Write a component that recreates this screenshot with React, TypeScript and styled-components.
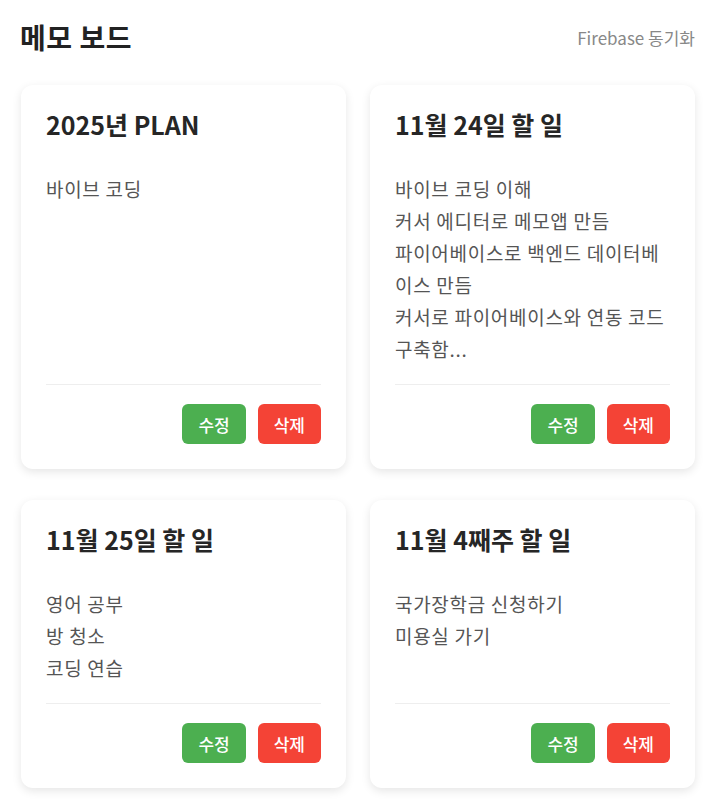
import React from "react";
import styled, { createGlobalStyle } from "styled-components";

const GlobalStyle = createGlobalStyle`
  body {
    margin: 0;
    background: #ffffff;
    font-family: "Noto Sans CJK KR", "Noto Sans", sans-serif;
    color: #333;
  }
  * {
    box-sizing: border-box;
  }
`;

const Page = styled.div`
  padding: 20px 15px 20px 20px;
`;

const Header = styled.header`
  display: flex;
  justify-content: space-between;
  align-items: center;
  height: 34px;
  margin-bottom: 31px;
`;

const Title = styled.h1`
  margin: 0;
  font-size: 28px;
  font-weight: 700;
  line-height: 34px;
  letter-spacing: 0.5px;
  color: #222;
`;

const SyncLabel = styled.span`
  font-size: 17px;
  color: #888;
`;

const Grid = styled.div`
  display: grid;
  grid-template-columns: 1fr 1fr;
  column-gap: 24px;
  row-gap: 31px;
  padding-left: 1px;
`;

const Card = styled.div`
  display: flex;
  flex-direction: column;
  background: #fff;
  border-radius: 12px;
  box-shadow: 0 3px 10px rgba(0, 0, 0, 0.1);
  padding: 25px;
`;

const CardTitle = styled.h3`
  margin: 0 0 34px;
  font-size: 25px;
  font-weight: 700;
  line-height: 29px;
  color: #262626;
`;

const CardBody = styled.p`
  flex: 1;
  margin: 0 0 19px;
  font-size: 19px;
  line-height: 32px;
  letter-spacing: 0.7px;
  color: #555;
  white-space: pre-line;
  word-break: break-all;
`;

const CardFooter = styled.div`
  display: flex;
  justify-content: flex-end;
  gap: 12px;
  border-top: 1px solid #eee;
  padding-top: 19px;
`;

const ActionButton = styled.button<{ $variant: "edit" | "delete" }>`
  height: 40px;
  padding: 0 16px;
  border: none;
  border-radius: 6px;
  font-family: inherit;
  font-size: 17px;
  font-weight: 500;
  color: #fff;
  cursor: pointer;
  background: ${(p) => (p.$variant === "edit" ? "#4caf50" : "#f44336")};
`;

const memos = [
  { id: 1, title: "2025년 PLAN", content: "바이브 코딩" },
  {
    id: 2,
    title: "11월 24일 할 일",
    content:
      "바이브 코딩 이해\n커서 에디터로 메모앱 만듬\n파이어베이스로 백엔드 데이터베이스 만듬\n커서로 파이어베이스와 연동 코드 구축함...",
  },
  { id: 3, title: "11월 25일 할 일", content: "영어 공부\n방 청소\n코딩 연습" },
  { id: 4, title: "11월 4째주 할 일", content: "국가장학금 신청하기\n미용실 가기" },
];

const App = () => {
  return (
    <>
      <GlobalStyle />
      <Page>
        <Header>
          <Title>메모 보드</Title>
          <SyncLabel>Firebase 동기화</SyncLabel>
        </Header>
        <Grid>
          {memos.map((memo) => (
            <Card key={memo.id}>
              <CardTitle>{memo.title}</CardTitle>
              <CardBody>{memo.content}</CardBody>
              <CardFooter>
                <ActionButton $variant="edit">수정</ActionButton>
                <ActionButton $variant="delete">삭제</ActionButton>
              </CardFooter>
            </Card>
          ))}
        </Grid>
      </Page>
    </>
  );
};

export default App;
